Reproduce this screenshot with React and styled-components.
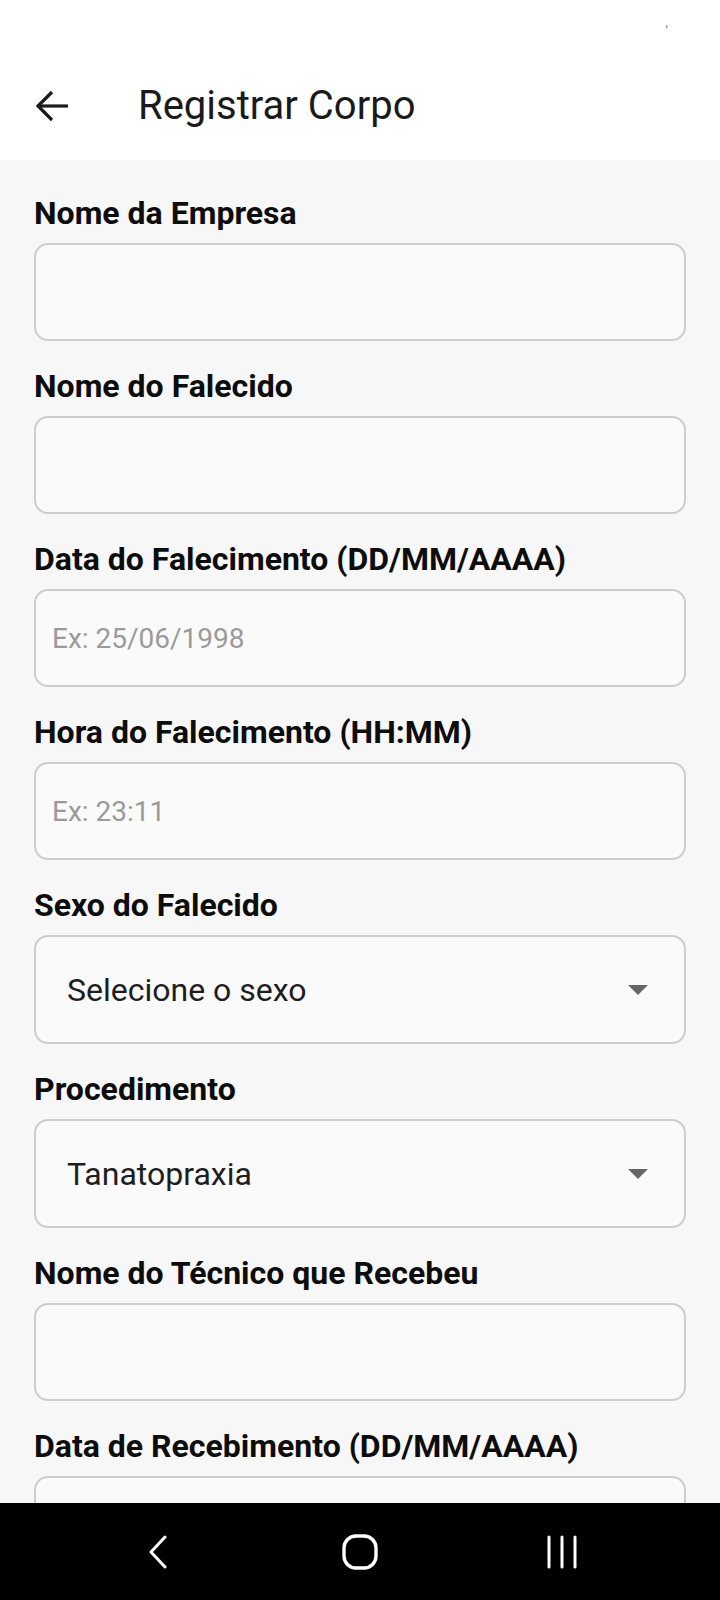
import styled, { createGlobalStyle } from "styled-components"

const GlobalStyle = createGlobalStyle`
  * { box-sizing: border-box; }
  body {
    margin: 0;
    background: #f7f7f7;
    font-family: Roboto, "Noto Sans", sans-serif;
  }
`

const fields = [
  { label: "Nome da Empresa" },
  { label: "Nome do Falecido" },
  { label: "Data do Falecimento (DD/MM/AAAA)", placeholder: "Ex: 25/06/1998" },
  { label: "Hora do Falecimento (HH:MM)", placeholder: "Ex: 23:11" },
  { label: "Sexo do Falecido", select: "Selecione o sexo" },
  { label: "Procedimento", select: "Tanatopraxia" },
  { label: "Nome do Técnico que Recebeu" },
  { label: "Data de Recebimento (DD/MM/AAAA)" },
]

export default function App() {
  return (
    <Screen>
      <GlobalStyle />
      <Top>
        <StatusBar><Tick>′</Tick></StatusBar>
        <AppBar>
          <svg width="32" height="32" viewBox="0 0 32 32" fill="none" stroke="#1a1a1a" strokeWidth="3.2" strokeLinecap="square">
            <path d="M31 16H3" />
            <path d="M16 2L2 16l14 14" strokeLinecap="butt" />
          </svg>
          <Title>Registrar Corpo</Title>
        </AppBar>
      </Top>

      <Form>
        {fields.map((f) => (
          <Field key={f.label}>
            <Label>{f.label}</Label>
            {f.select ? (
              <SelectBox>
                <span>{f.select}</span>
                <svg width="20" height="10" viewBox="0 0 20 10">
                  <path d="M0 0h20L10 10z" fill="#666" />
                </svg>
              </SelectBox>
            ) : (
              <Input placeholder={f.placeholder || ""} />
            )}
          </Field>
        ))}
      </Form>

      <NavBar>
        <NavItem>
          <svg width="20" height="34" viewBox="0 0 20 34" fill="none" stroke="#fff" strokeWidth="3" strokeLinecap="round" strokeLinejoin="round">
            <path d="M17 2L3 17l14 15" />
          </svg>
        </NavItem>
        <NavItem>
          <svg width="36" height="36" viewBox="0 0 36 36" fill="none" stroke="#fff" strokeWidth="3.4">
            <rect x="2" y="2" width="32" height="32" rx="12" />
          </svg>
        </NavItem>
        <NavItem>
          <svg width="32" height="34" viewBox="0 0 32 34" fill="none" stroke="#fff" strokeWidth="3" strokeLinecap="round">
            <path d="M3 2v30M16 2v30M29 2v30" />
          </svg>
        </NavItem>
      </NavBar>
    </Screen>
  )
}

const Screen = styled.div`
  width: 720px;
  height: 1600px;
  display: flex;
  flex-direction: column;
  overflow: hidden;
  background: #f7f7f7;
`

const Top = styled.header`
  background: #ffffff;
  height: 160px;
  display: flex;
  flex-direction: column;
`

const StatusBar = styled.div`
  height: 52px;
  display: flex;
  justify-content: flex-end;
  align-items: flex-end;
  padding-right: 52px;
`

const Tick = styled.span`
  font-size: 14px;
  color: #777;
  line-height: 1;
  margin-bottom: 14px;
`

const AppBar = styled.div`
  flex: 1;
  display: flex;
  align-items: center;
  gap: 70px;
  padding-left: 36px;
`

const Title = styled.h1`
  margin: 0;
  font-size: 40px;
  font-weight: 400;
  color: #1a1a1a;
  line-height: 1;
`

const Form = styled.main`
  flex: 1;
  overflow: hidden;
  padding: 37px 34px 0;
`

const Field = styled.div`
  display: flex;
  flex-direction: column;
  margin-bottom: 29px;
`

const Label = styled.label`
  font-size: 32px;
  font-weight: 700;
  line-height: 32px;
  color: #0d0d0d;
  margin-bottom: 14px;
`

const Input = styled.input`
  height: 98px;
  width: 100%;
  border: 2px solid #cdcdcd;
  border-radius: 14px;
  background: #fafafa;
  padding: 0 16px;
  font-family: Roboto, sans-serif;
  font-size: 28px;
  color: #222;
  outline: none;

  &::placeholder {
    color: #9a9a9a;
  }
`

const SelectBox = styled.div`
  height: 109px;
  border: 2px solid #cdcdcd;
  border-radius: 14px;
  background: #fafafa;
  display: flex;
  align-items: center;
  justify-content: space-between;
  padding: 0 36px 0 31px;
  font-size: 32px;
  color: #1e1e1e;
`

const NavBar = styled.nav`
  height: 97px;
  background: #000;
  display: flex;
  justify-content: center;
  align-items: center;
`

const NavItem = styled.div`
  width: 202px;
  display: flex;
  justify-content: center;
  align-items: center;
`
